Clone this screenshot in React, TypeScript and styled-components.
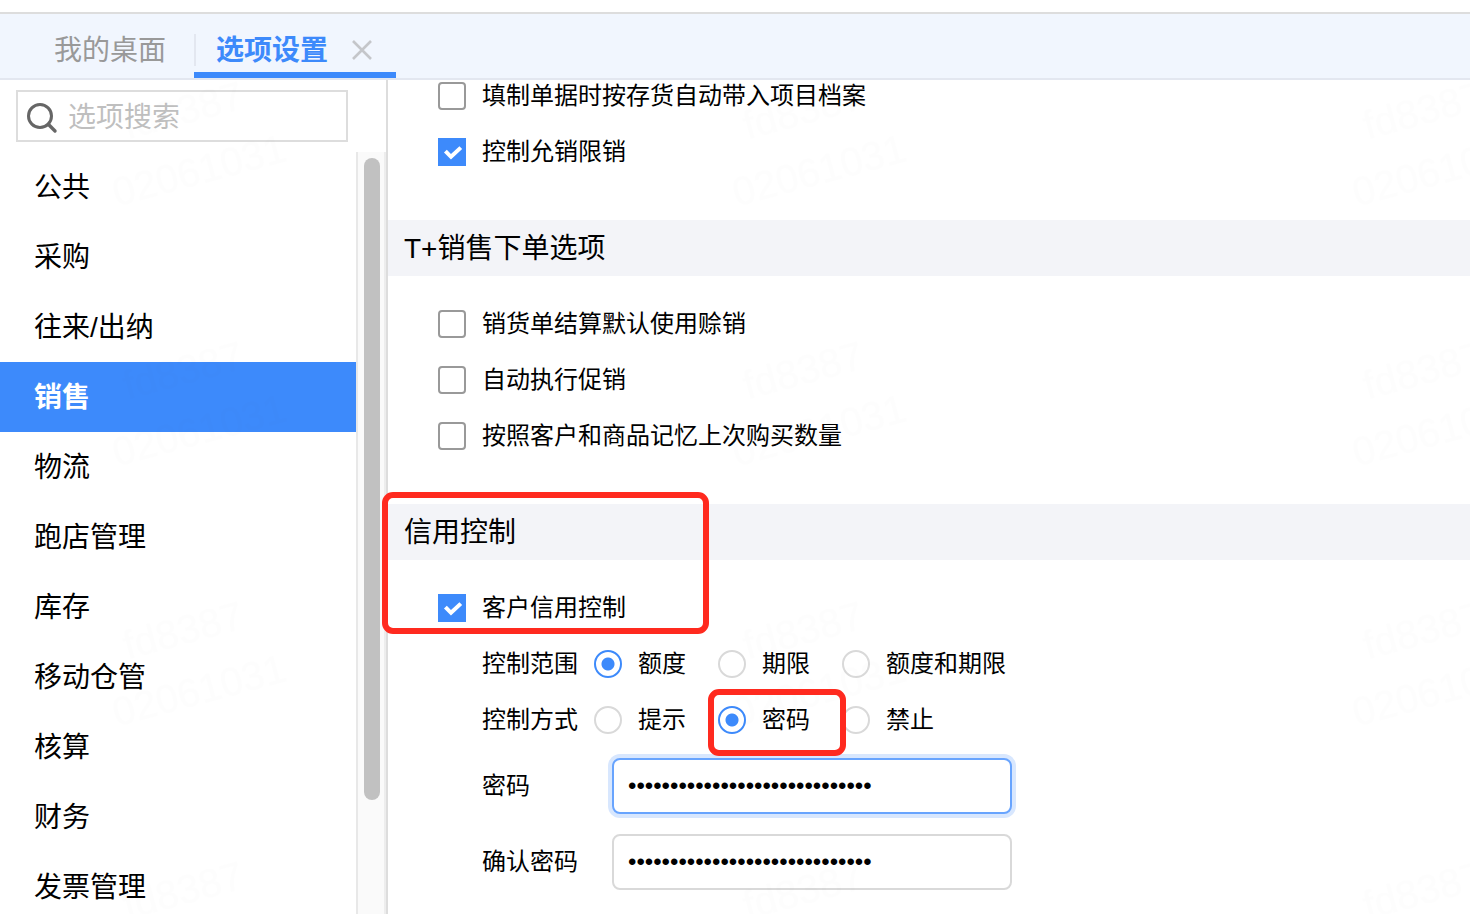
import React, { useState } from 'react';
import styled, { createGlobalStyle } from 'styled-components';

const BLUE = '#3d8afb';
const LINE = '#dddddd';

const GlobalStyle = createGlobalStyle`
  *, *::before, *::after { box-sizing: border-box; }
  body {
    margin: 0;
    background: #fff;
    color: #000;
    font-family: "Liberation Sans", "Noto Sans CJK SC", sans-serif;
  }
  button, input { font: inherit; color: inherit; }
`;

const Shell = styled.div`
  display: flex;
  flex-direction: column;
  height: 100vh;
  padding-top: 12px;
  overflow: hidden;
`;

const TabBar = styled.header`
  display: flex;
  flex: none;
  height: 68px;
  padding-left: 26px;
  background: #f1f6fe;
  border-top: 2px solid ${LINE};
  border-bottom: 2px solid #e3e7f0;
`;

const Tab = styled.div<{ $active?: boolean }>`
  position: relative;
  display: flex;
  align-items: center;
  gap: 24px;
  padding: ${(p) => (p.$active ? '14px 24px 0 22px' : '14px 28px 0')};
  border-bottom: 6px solid ${(p) => (p.$active ? BLUE : 'transparent')};

  &::before {
    content: '';
    position: absolute;
    left: 0;
    top: 20px;
    width: 2px;
    height: 32px;
    background: ${(p) => (p.$active ? '#e3e7f0' : 'transparent')};
  }
`;

const TabButton = styled.button<{ $active?: boolean }>`
  padding: 2px 0 0;
  border: 0;
  background: none;
  font-size: 28px;
  line-height: 40px;
  font-weight: ${(p) => (p.$active ? 700 : 400)};
  color: ${(p) => (p.$active ? BLUE : '#999999')};
`;

const CloseButton = styled.button`
  display: flex;
  padding: 0;
  border: 0;
  background: none;
  color: #c4c6ca;
`;

const Workspace = styled.div`
  position: relative;
  display: flex;
  flex: 1;
  min-height: 0;
  overflow: hidden;
`;

const Sidebar = styled.aside`
  display: flex;
  flex: none;
  flex-direction: column;
  width: 388px;
  border-right: 2px solid ${LINE};
`;

const SearchBox = styled.label`
  display: flex;
  flex: none;
  align-items: center;
  gap: 10px;
  height: 52px;
  margin: 10px 38px 10px 16px;
  padding: 0 8px;
  border: 2px solid ${LINE};

  svg { overflow: visible; }
`;

const SearchInput = styled.input`
  flex: 1;
  min-width: 0;
  padding: 4px 0 0;
  border: 0;
  outline: 0;
  background: none;
  font-size: 28px;
  line-height: 40px;

  &::placeholder { color: #bfbfbf; opacity: 1; }
`;

const NavArea = styled.div`
  display: flex;
  flex: 1;
  min-height: 0;
`;

const NavList = styled.nav`
  flex: 1;
  overflow: hidden;
`;

const NavItem = styled.button<{ $active: boolean }>`
  display: block;
  width: 100%;
  height: 70px;
  padding: 2px 34px 0;
  border: 0;
  background: ${(p) => (p.$active ? BLUE : 'transparent')};
  color: ${(p) => (p.$active ? '#fff' : '#000')};
  font-size: 28px;
  line-height: 40px;
  font-weight: ${(p) => (p.$active ? 700 : 400)};
  text-align: left;
`;

const ScrollTrack = styled.div`
  width: 30px;
  padding: 6px 4px 0 6px;
  background: #fafafa;
  border-left: 2px solid #e8e8e8;
  border-right: 2px solid #ededed;
`;

const ScrollThumb = styled.div`
  width: 16px;
  height: 642px;
  border-radius: 8px;
  background: #c1c1c1;
`;

const Content = styled.main`
  flex: 1;
  min-width: 0;
  margin-top: -12px;
`;

const Section = styled.section`
  position: relative;
  padding-bottom: 40px;
`;

const SectionTitle = styled.h2`
  height: 56px;
  margin: 0 0 20px;
  padding: 2px 16px 0;
  background: #f3f4f8;
  font-size: 28px;
  line-height: 54px;
  font-weight: 400;
`;

const OptionRow = styled.label`
  display: flex;
  align-items: center;
  gap: 16px;
  height: 56px;
  padding-left: 50px;
  font-size: 24px;
  line-height: 36px;
`;

const CheckMark = styled.span`
  position: relative;
  display: flex;
  width: 28px;
  height: 28px;

  svg {
    position: absolute;
    inset: 0;
    pointer-events: none;
  }
`;

const CheckInput = styled.input`
  appearance: none;
  width: 28px;
  height: 28px;
  margin: 0;
  border: 2px solid #999999;
  border-radius: 4px;
  background: #fff;

  &:checked {
    border-color: ${BLUE};
    border-radius: 0;
    background: ${BLUE};
  }
`;

const RadioRow = styled.div`
  display: flex;
  align-items: center;
  gap: 16px;
  height: 56px;
  padding-left: 94px;
  font-size: 24px;
  line-height: 36px;
`;

const RadioGroup = styled.div`
  display: flex;
  gap: 32px;
`;

const RadioLabel = styled.label`
  position: relative;
  display: flex;
  align-items: center;
  gap: 16px;
`;

const RadioInput = styled.input`
  appearance: none;
  width: 28px;
  height: 28px;
  margin: 0;
  border: 2px solid #d9d9d9;
  border-radius: 50%;
  background: #fff;

  &:checked {
    border-color: ${BLUE};
    background: radial-gradient(circle, ${BLUE} 6px, #fff 7px);
  }
`;

const FieldRow = styled.div`
  display: flex;
  align-items: center;
  height: 76px;
  padding-left: 94px;
  font-size: 24px;
  line-height: 36px;

  label { width: 130px; }
`;

const PasswordInput = styled.input<{ $focused?: boolean }>`
  width: 400px;
  height: 56px;
  padding: 0 14px;
  border: 2px solid ${(p) => (p.$focused ? '#68a4fe' : '#d9d9d9')};
  border-radius: 8px;
  outline: 0;
  background: #fff;
  box-shadow: ${(p) => (p.$focused ? '0 0 0 4px #d8e7fe' : 'none')};
`;

const Highlight = styled.div<{ $kind: 'section' | 'choice' }>`
  position: absolute;
  z-index: 1;
  border: 6px solid #ff2a1f;
  border-radius: 11px;
  pointer-events: none;
  ${(p) =>
    p.$kind === 'section'
      ? 'left: -6px; top: -12px; width: 327px; height: 142px;'
      : 'left: -10px; right: -36px; top: -13px; height: 67px;'}
`;

const WatermarkLayer = styled.svg`
  position: absolute;
  inset: 0;
  width: 100%;
  height: 100%;
  pointer-events: none;
  font-size: 40px;
`;

const navItems = ['公共', '采购', '往来/出纳', '销售', '物流', '跑店管理', '库存', '移动仓管', '核算', '财务', '发票管理'];

function Option({ label, initial = false }: { label: string; initial?: boolean }) {
  const [on, setOn] = useState(initial);
  return (
    <OptionRow>
      <CheckMark>
        <CheckInput type="checkbox" checked={on} onChange={(e) => setOn(e.target.checked)} />
        {on && (
          <svg width="28" height="28" viewBox="0 0 28 28" fill="none" stroke="#fff" strokeWidth="4">
            <path d="M7.4 13.2 L13 18.8 L22.8 9.6" />
          </svg>
        )}
      </CheckMark>
      {label}
    </OptionRow>
  );
}

function Choices({ label, name, options, initial, marked }: {
  label: string; name: string; options: string[]; initial: string; marked?: string;
}) {
  const [value, setValue] = useState(initial);
  return (
    <RadioRow>
      <span id={name}>{label}</span>
      <RadioGroup role="radiogroup" aria-labelledby={name}>
        {options.map((o) => (
          <RadioLabel key={o}>
            <RadioInput type="radio" name={name} checked={value === o} onChange={() => setValue(o)} />
            {o}
            {marked === o && <Highlight $kind="choice" />}
          </RadioLabel>
        ))}
      </RadioGroup>
    </RadioRow>
  );
}

/* Faint account stamp repeated across the workspace. */
function Watermark() {
  return (
    <WatermarkLayer aria-hidden="true">
      <defs>
        <pattern id="stamp" x="-119" y="-70" width="620" height="260" patternUnits="userSpaceOnUse">
          <g transform="translate(310 130) rotate(-15)" fill="#000" fillOpacity="0.007" textAnchor="middle">
            <text y="-17">fd8387</text>
            <text y="45">02061031</text>
          </g>
        </pattern>
      </defs>
      <rect width="100%" height="100%" fill="url(#stamp)" />
    </WatermarkLayer>
  );
}

export default function App() {
  const [nav, setNav] = useState('销售');
  const [password, setPassword] = useState('x'.repeat(29));
  const [confirm, setConfirm] = useState('x'.repeat(29));

  return (
    <Shell>
      <GlobalStyle />
      <TabBar>
        <Tab>
          <TabButton>我的桌面</TabButton>
        </Tab>
        <Tab $active>
          <TabButton $active>选项设置</TabButton>
          <CloseButton aria-label="关闭">
            <svg width="20" height="20" viewBox="0 0 20 20" fill="none" stroke="currentColor" strokeWidth="2.6">
              <path d="M1 1 L19 19 M19 1 L1 19" />
            </svg>
          </CloseButton>
        </Tab>
      </TabBar>
      <Workspace>
        <Sidebar>
          <SearchBox>
            <svg width="32" height="32" viewBox="0 0 32 32" fill="none" stroke="#666" strokeWidth="3">
              <circle cx="14" cy="16" r="11.5" />
              <path d="M22.3 24.3 L29 31" strokeWidth="3.4" strokeLinecap="round" />
            </svg>
            <SearchInput type="text" placeholder="选项搜索" aria-label="选项搜索" />
          </SearchBox>
          <NavArea>
            <NavList>
              {navItems.map((item) => (
                <NavItem key={item} $active={item === nav} onClick={() => setNav(item)}>
                  {item}
                </NavItem>
              ))}
            </NavList>
            <ScrollTrack>
              <ScrollThumb />
            </ScrollTrack>
          </NavArea>
        </Sidebar>
        <Content>
          <Section>
            <Option label="填制单据时按存货自动带入项目档案" />
            <Option label="控制允销限销" initial />
          </Section>
          <Section>
            <SectionTitle>T+销售下单选项</SectionTitle>
            <Option label="销货单结算默认使用赊销" />
            <Option label="自动执行促销" />
            <Option label="按照客户和商品记忆上次购买数量" />
          </Section>
          <Section>
            <SectionTitle>信用控制</SectionTitle>
            <Option label="客户信用控制" initial />
            <Choices label="控制范围" name="scope" options={['额度', '期限', '额度和期限']} initial="额度" />
            <Choices label="控制方式" name="mode" options={['提示', '密码', '禁止']} initial="密码" marked="密码" />
            <FieldRow>
              <label htmlFor="password">密码</label>
              <PasswordInput id="password" type="password" $focused value={password} onChange={(e) => setPassword(e.target.value)} />
            </FieldRow>
            <FieldRow>
              <label htmlFor="confirm">确认密码</label>
              <PasswordInput id="confirm" type="password" value={confirm} onChange={(e) => setConfirm(e.target.value)} />
            </FieldRow>
            <Highlight $kind="section" />
          </Section>
        </Content>
        <Watermark />
      </Workspace>
    </Shell>
  );
}
